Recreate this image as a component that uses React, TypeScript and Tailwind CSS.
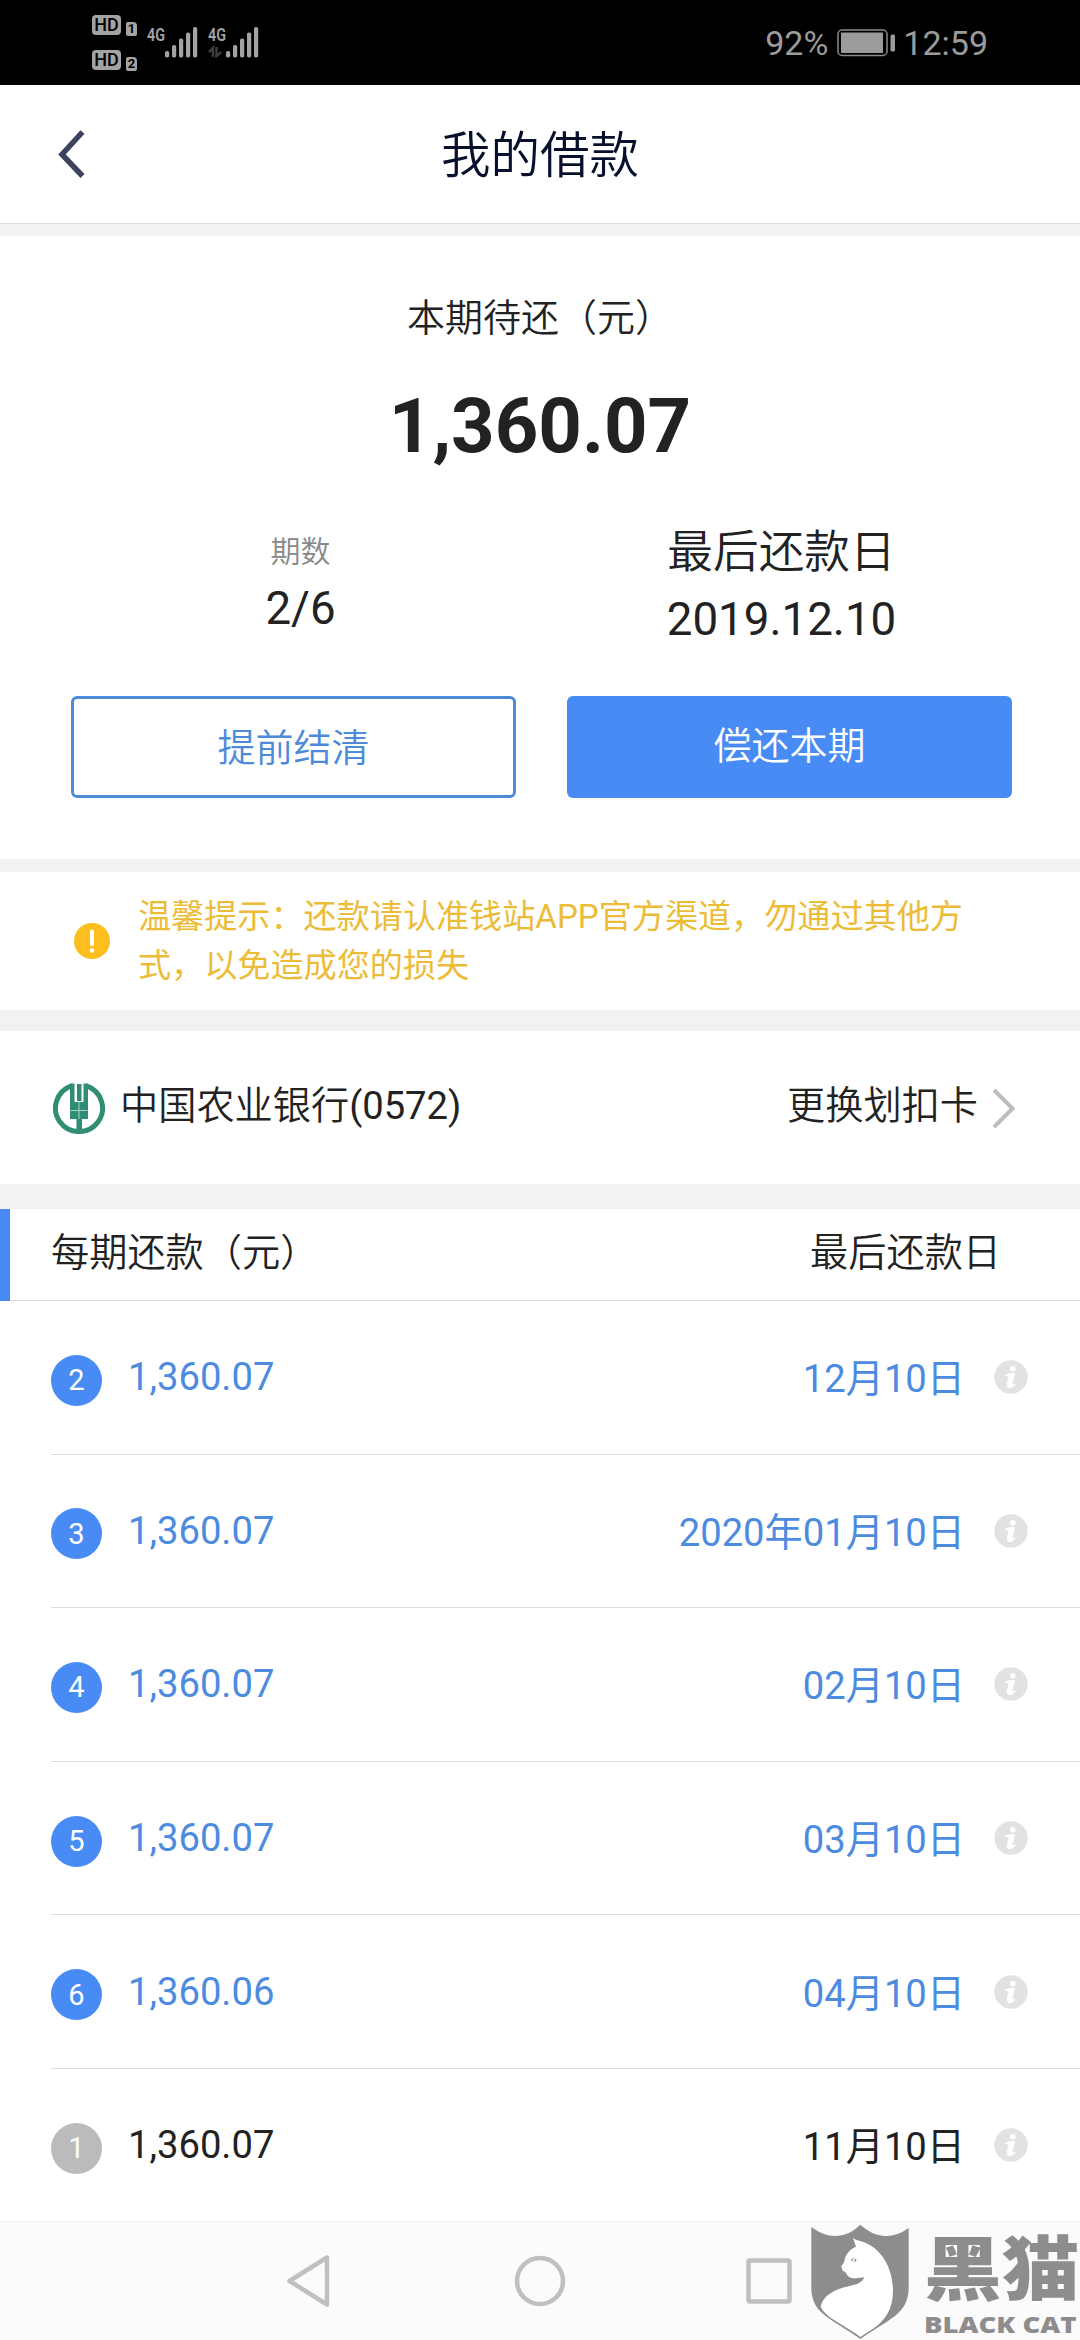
import React from "react";

const installments = [
  { no: 2, amount: "1,360.07", date: "12月10日", paid: false },
  { no: 3, amount: "1,360.07", date: "2020年01月10日", paid: false },
  { no: 4, amount: "1,360.07", date: "02月10日", paid: false },
  { no: 5, amount: "1,360.07", date: "03月10日", paid: false },
  { no: 6, amount: "1,360.06", date: "04月10日", paid: false },
  { no: 1, amount: "1,360.07", date: "11月10日", paid: true }
];

const bars = [
  { x: 0, y: 51 },
  { x: 7, y: 45 },
  { x: 14, y: 38.5 },
  { x: 21, y: 32.5 },
  { x: 28, y: 27 }
];

function HdBadge({ label }: { label: string }) {
  return (
    <div className="flex items-end gap-[5px]">
      <span className="flex h-[20px] w-[29px] items-center justify-center rounded-[4px] bg-[#a3a3a3] text-[18px] leading-none font-medium text-black">
        HD
      </span>
      <span className="-mb-px flex h-[14px] w-[11px] items-center justify-center rounded-[2px] rounded-tr-[4px] bg-[#a3a3a3] text-[13px] leading-none font-bold text-black">
        {label}
      </span>
    </div>
  );
}

function Signal({ data }: { data?: boolean }) {
  return (
    <svg width="61" height="85" viewBox="0 0 61 85" fill="#a3a3a3">
      <text x="0" y="41" fontSize="19" fontWeight="600" textLength="18" lengthAdjust="spacingAndGlyphs">4G</text>
      {bars.map((bar) => (
        <rect key={bar.x} x={18 + bar.x} y={bar.y} width="4.200" height={57.5 - bar.y} rx="1.800" />
      ))}
      {data && <path d="M1 52l4-4v9M8.500 47v9l5-4" fill="none" stroke="#3d3d3d" strokeWidth="2.500" />}
    </svg>
  );
}

function StatusBar() {
  return (
    <header className="flex h-[85px] shrink-0 items-center bg-black pl-[92px] pr-[92px] text-[#9b9b9b]">
      <div className="flex flex-col gap-[15px] pb-px">
        <HdBadge label="1" />
        <HdBadge label="2" />
      </div>
      <div className="ml-[10px] flex">
        <Signal />
        <Signal data />
      </div>
      <div className="ml-auto flex items-center text-[34px] leading-[40px]">
        <span>92%</span>
        <svg className="ml-[9px] mr-[7px]" width="59" height="28" viewBox="0 0 59 28">
          <rect x="1" y="1" width="49" height="25.500" rx="4" fill="none" stroke="#8a8a8a" strokeWidth="1.500" />
          <rect x="4" y="3.500" width="42" height="20.500" rx="1" fill="#9b9b9b" />
          <rect x="53.500" y="5.500" width="4.500" height="17" rx="1.500" fill="#9b9b9b" />
        </svg>
        <span>12:59</span>
      </div>
    </header>
  );
}

function TitleBar() {
  return (
    <div className="grid h-[139px] shrink-0 grid-cols-3 items-center border-b border-[#dcdcdc] bg-white">
      <svg className="ml-[56px]" width="30" height="50" viewBox="0 0 30 50" fill="none" stroke="#3c4260" strokeWidth="5.500">
        <path d="M26.500 3L6 25.500 26.500 47" />
      </svg>
      <h1 className="pt-[3px] text-center text-[49.500px] leading-[60px] font-[350] text-[#07112b]">我的借款</h1>
    </div>
  );
}

function Summary() {
  return (
    <section className="flex h-[623px] shrink-0 flex-col items-center bg-white pt-[62px] text-[#222]">
      <p className="text-[38px] leading-[40px] font-[350]">本期待还（元）</p>
      <p className="mt-[48px] text-[76px] leading-[80px] font-bold">1,360.07</p>
      <div className="mt-[62px] ml-[2px] grid w-[962px] grid-cols-2 text-center text-[45.700px] leading-[50px]">
        <div className="pt-1">
          <p className="text-[30px] leading-[40px] font-[350] text-[#888]">期数</p>
          <p className="mt-[12px]">2/6</p>
        </div>
        <div>
          <p className="font-[350]">最后还款日</p>
          <p className="mt-[17px]">2019.12.10</p>
        </div>
      </div>
      <div className="mt-[51px] ml-[3px] grid w-[941px] grid-cols-2 gap-[51px] text-[38px] leading-[40px] font-[350]">
        <button className="h-[102px] rounded-[6px] border-[3px] border-[#4d8bd9] pt-[1px] text-[#4d8bd9]">提前结清</button>
        <button className="h-[102px] rounded-[6px] bg-[#488bf4] pb-[2px] text-white">偿还本期</button>
      </div>
    </section>
  );
}

function Notice() {
  return (
    <section className="mt-[13px] flex h-[138px] shrink-0 items-center bg-white pl-[74px]">
      <svg width="36" height="36" viewBox="0 0 36 36" fill="#fff">
        <circle cx="18" cy="18" r="18" fill="#fcbf1e" />
        <rect x="16" y="6.500" width="4" height="16.500" rx="2" />
        <circle cx="18" cy="27.500" r="2.200" />
      </svg>
      <p className="ml-[28px] w-[840px] text-[33.120px] leading-[49px] text-[#ecbc38]">
        温馨提示：还款请认准钱站APP官方渠道，勿通过其他方式，以免造成您的损失
      </p>
    </section>
  );
}

function BankLogo() {
  return (
    <svg width="52" height="52" viewBox="0 0 52 52" fill="#2f8d74">
      <path d="M18.500 3.800A23.500 23.500 0 1 0 33.500 3.800" fill="none" stroke="#2f8d74" strokeWidth="5" />
      <path d="M17 1.500h4.500V20h9V1.500H35V37H17z" />
      <rect x="24" y="2" width="4.500" height="17" />
      <rect x="23.500" y="36" width="5.500" height="14" />
      <path d="M26 20v17M17.500 28.500h17" stroke="#a9d5c8" strokeWidth="1" />
    </svg>
  );
}

function BankCard() {
  return (
    <section className="mt-[21px] flex h-[153px] shrink-0 items-center bg-white pl-[53px] pr-[64px] text-[38.200px] leading-[40px] text-[#222]">
      <BankLogo />
      <span className="ml-[15px] pb-[4px]">
        <span className="font-[350]">中国农业银行</span>(0572)
      </span>
      <span className="ml-auto pb-[4px] font-[350]">更换划扣卡</span>
      <svg className="ml-[13px]" width="25" height="42" viewBox="0 0 25 42" fill="none" stroke="#bdbdbd" strokeWidth="4">
        <path d="M3 3l18.500 18.500L3 40" />
      </svg>
    </section>
  );
}

function InfoIcon() {
  return (
    <svg width="34" height="34" viewBox="0 0 34 34">
      <circle cx="17" cy="17" r="16.700" fill="#e2e2e2" />
      <circle cx="18.800" cy="8.700" r="2.800" fill="#fff" />
      <path d="M11 15.200Q15 13.200 20.500 13.500L18 23.500Q18 25.300 21.500 24.200Q18.500 28.200 15 27.800Q12.500 27 13.300 24L15.200 16.500Z" fill="#fff" stroke="#fff" strokeWidth="1" strokeLinejoin="round" />
    </svg>
  );
}

function Schedule() {
  return (
    <section className="mt-[25px] min-h-0 flex-1 overflow-hidden bg-white text-[38.200px] leading-[40px] text-[#222]">
      <div className="flex h-[92px]">
        <div className="w-[10px] bg-[#488bf4]" />
        <div className="flex flex-1 items-center justify-between border-b border-[#dcdcdc] pb-[4px] pl-[41px] pr-[79px] font-[350]">
          <span>每期还款（元）</span>
          <span>最后还款日</span>
        </div>
      </div>
      <ul className="pl-[51px]">
        {installments.map((item) => (
          <li
            key={item.no}
            className={`flex h-[153.600px] items-center border-b border-[#dedede] pr-[52px] ${item.paid ? "text-[#222]" : "text-[#4d8bdf]"}`}
          >
            <span
              className={`mt-[6px] flex h-[51px] w-[51px] items-center justify-center rounded-full text-[29px] text-white ${item.paid ? "bg-[#bbb]" : "bg-[#488bf4]"}`}
            >
              {item.no}
            </span>
            <span className="ml-[26px]">{item.amount}</span>
            <span className="ml-auto mr-[29px] pt-[4px]">{item.date}</span>
            <InfoIcon />
          </li>
        ))}
      </ul>
    </section>
  );
}

function NavBar() {
  return (
    <nav className="h-[119px] shrink-0 border-t border-[#f5f5f5] bg-[#fbfbfb]">
      <div className="flex h-full items-center justify-between pl-[286px] pr-[288px]">
        <svg width="46" height="54" viewBox="0 0 46 54" fill="none" stroke="#c0c0c0" strokeWidth="4.500" strokeLinejoin="round">
          <path d="M41 3.500v47L3.500 27z" />
        </svg>
        <svg className="ml-[1px]" width="52" height="54" viewBox="0 0 52 54" fill="none" stroke="#c0c0c0" strokeWidth="4.500">
          <circle cx="26" cy="27" r="23" />
        </svg>
        <svg width="46" height="54" viewBox="0 0 46 54" fill="none" stroke="#c0c0c0" strokeWidth="4.500">
          <rect x="2.500" y="6.500" width="41" height="41" rx="1.500" />
        </svg>
      </div>
    </nav>
  );
}

function Watermark() {
  return (
    <div className="absolute right-0 bottom-0 flex h-[116px] w-[269px] text-[#8f8c8d]">
      <svg width="98" height="116" viewBox="212 493 294 348" fill="currentColor">
        <path d="M213 502Q250 530 288 529T360 495Q395 527 432 529T505 505V685C505 722 490 748 465 768C430 795 395 812 360 838C325 812 290 795 255 768C228 748 213 722 213 685Z" />
        <path
          fill="#fff"
          d="M338 534L347 541L357 543C412 556 458 612 458 695C458 750 432 785 400 806C385 816 370 826 360 832C330 808 295 793 265 770C252 759 245 750 241 741C250 703 290 688 325 680C350 675 367 668 372 653L345 656C327 657 319 645 317 639L306 632L303 620L312 606C314 587 325 571 347 561Z"
        />
        <path d="M332 594l14 4c4 1 2 9-4 9l2-7zM332 598q0 6 6 8v-6z" />
      </svg>
      <div className="ml-[15px] flex-1">
        <p className="mt-[6px] w-[140px] origin-left scale-x-[1.11] text-[70px] leading-[70px] font-black whitespace-nowrap [font-family:'Noto_Sans_CJK_SC',sans-serif]">黑猫</p>
        <p className="mt-[13px] w-[120px] origin-left scale-x-[1.25] text-[22px] leading-[22px] font-extrabold whitespace-nowrap [font-family:'Open_Sans',sans-serif]">BLACK CAT</p>
      </div>
    </div>
  );
}

export default function App() {
  return (
    <div className="relative flex h-[2340px] w-[1080px] flex-col overflow-hidden bg-[#f2f2f2] [font-family:Roboto,'Noto_Sans_CJK_SC',sans-serif]">
      <StatusBar />
      <TitleBar />
      <div className="h-[12px] shrink-0" />
      <Summary />
      <Notice />
      <BankCard />
      <Schedule />
      <NavBar />
      <Watermark />
    </div>
  );
}
